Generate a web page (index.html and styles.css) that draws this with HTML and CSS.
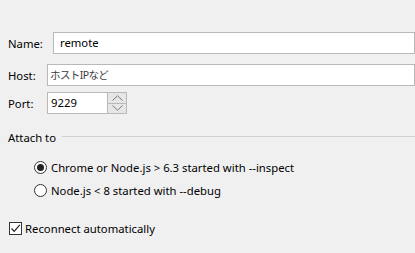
FILE: index.html
```html
<!DOCTYPE html>
<html lang="ja">
<head>
    <meta charset="UTF-8">
    <title>Attach to Node.js/Chrome</title>
    <link rel="stylesheet" href="styles.css">
</head>
<body>

<div class="dialog">

    <div class="row name_row">
        <label class="lbl name_lbl" for="name">Name:</label>
        <input class="field" id="name" type="text" value="remote">
    </div>

    <div class="row host_row">
        <label class="lbl short_lbl" for="host">Host:</label>
        <input class="field" id="host" type="text" placeholder="ホストIPなど">
    </div>

    <div class="row port_row">
        <label class="lbl short_lbl" for="port">Port:</label>
        <div class="spinner">
            <input class="field port_field" id="port" type="text" value="9229">
            <div class="spin_btns">
                <span class="spin_btn">
                    <svg width="11" height="6" viewBox="0 0 11 6"><path d="M0.5 5.5 L5.5 0.8 L10.5 5.5" fill="none" stroke="#7a7a7a" stroke-width="1"/></svg>
                </span>
                <span class="spin_btn">
                    <svg width="11" height="6" viewBox="0 0 11 6"><path d="M0.5 0.5 L5.5 5.2 L10.5 0.5" fill="none" stroke="#7a7a7a" stroke-width="1"/></svg>
                </span>
            </div>
        </div>
    </div>

    <!-- group separator -->
    <div class="group_title">
        <span>Attach to</span>
        <span class="group_line"></span>
    </div>

    <div class="radios">
        <label class="radio">
            <span class="radio_dot checked"></span>
            Chrome or Node.js &gt; 6.3 started with --inspect
        </label>
        <label class="radio">
            <span class="radio_dot"></span>
            Node.js &lt; 8 started with --debug
        </label>
    </div>

    <label class="check">
        <span class="check_box">
            <svg width="11" height="11" viewBox="0 0 11 11"><path d="M1.5 5.5 L4.2 8.3 L9.8 1.8" fill="none" stroke="#222" stroke-width="1.2"/></svg>
        </span>
        Reconnect automatically
    </label>

</div>

</body>
</html>
```

FILE: styles.css
```css
html, body {
    margin: 0;
    padding: 0;
    background: #f0f0f0;
}

.dialog {
    font-family: "Noto Sans", "Noto Sans CJK JP", sans-serif;
    font-size: 11.3px;
    color: #000;
    padding: 32px 0 0 8px;
    height: 253px;
    box-sizing: border-box;
    overflow: hidden;
}

.row {
    display: flex;
    align-items: center;
    height: 22px;
}

.host_row { margin-top: 10px; }
.port_row { margin-top: 6px; }

.lbl { flex: none; }
.name_lbl { width: 45px; }
.short_lbl { width: 39px; }

.field {
    flex: 1;
    box-sizing: border-box;
    height: 22px;
    margin: 0;
    padding: 0 0 1px 6px;
    border: 1px solid #b9b9b9;
    background: #fff;
    font: inherit;
    color: #000;
    outline: none;
}

#host {
    padding-left: 2px;
    font-size: 10.5px;
    letter-spacing: -0.6px;
}

#host::placeholder {
    color: #3c3c3c;
}

.spinner {
    display: flex;
    height: 22px;
}

.port_field {
    flex: none;
    width: 61px;
    padding-left: 3px;
}

.spin_btns {
    display: flex;
    flex-direction: column;
    width: 20px;
    margin-left: -1px;
    border: 1px solid #b9b9b9;
    box-sizing: border-box;
}

.spin_btn {
    flex: 1;
    display: flex;
    align-items: center;
    justify-content: center;
    background: #e6e6e6;
}

.spin_btn + .spin_btn {
    border-top: 1px solid #b9b9b9;
}

.group_title {
    display: flex;
    align-items: center;
    gap: 6px;
    margin-top: 15px;
    height: 16px;
}

.group_line {
    flex: 1;
    height: 1px;
    background: #d0d0d0;
    margin-top: -2px;
}

.radios {
    display: flex;
    flex-direction: column;
    gap: 6px;
    padding: 14px 0 0 26px;
}

.radio, .check {
    display: flex;
    align-items: center;
    height: 17px;
    gap: 4px;
}

.radio_dot {
    flex: none;
    width: 13px;
    height: 13px;
    box-sizing: border-box;
    border: 1px solid #333;
    border-radius: 50%;
    background: #fff;
    position: relative;
}

.radio_dot.checked:after {
    content: "";
    position: absolute;
    left: 2px;
    top: 2px;
    width: 7px;
    height: 7px;
    border-radius: 50%;
    background: #222;
}

.check {
    margin-top: 21px;
    margin-left: 1px;
    gap: 3px;
}

.check_box {
    flex: none;
    width: 13px;
    height: 13px;
    box-sizing: border-box;
    border: 1px solid #333;
    background: #fff;
    display: flex;
    align-items: center;
    justify-content: center;
}
```
